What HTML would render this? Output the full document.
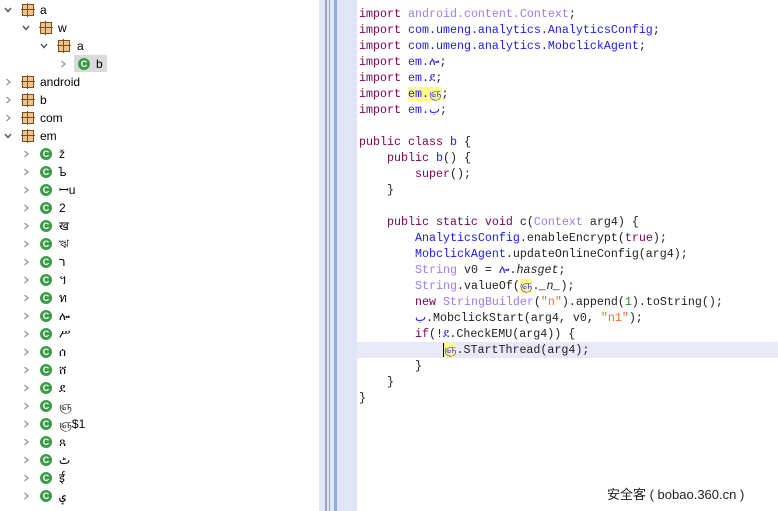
<!DOCTYPE html>
<html><head><meta charset="utf-8"><style>
*{margin:0;padding:0;box-sizing:border-box}
body{width:778px;height:511px;overflow:hidden;background:#fff;position:relative;font-family:"Liberation Sans","Noto Sans CJK SC",sans-serif}
.row{position:absolute;height:18px;line-height:18px;font-size:12px;color:#000;white-space:nowrap}
.chev{position:absolute;top:5px;width:8px;height:8px}
.pkg{position:absolute;top:3px;width:12px;height:12px;background:#e8c690;border:1px solid #8a4b1c}
.pkg:before{content:"";position:absolute;left:4px;top:-2px;width:1px;height:14px;background:#8a4b1c}
.pkg:after{content:"";position:absolute;top:4px;left:-2px;height:1px;width:14px;background:#8a4b1c}
.cls{position:absolute;top:3px;width:12px;height:12px;border-radius:50%;background:#3c9b48;color:#fff;font:900 9px/12px "Liberation Sans",sans-serif;text-align:center}
.t{position:absolute;top:0}
.strip{position:absolute;top:0;height:511px}
.code{position:absolute;left:359px;top:6px;font-family:"Liberation Mono","DejaVu Sans",monospace;font-size:11.67px;line-height:16px;color:#222;white-space:pre}
.k{color:#7f0055}.p{color:#a07cf0}.b{color:#1a1aff}.s{color:#ff6a1a}.g{color:#2a8a2a}
.y{background:#ffff88}
</style></head><body>
<div class="row" style="left:0;top:1px;width:300px"><svg class="chev" style="left:4px" viewBox="0 0 8 8"><path d="M1 2 L4 5.5 L7 2" fill="none" stroke="#555" stroke-width="1.4"/></svg><div class="pkg" style="left:22px"></div><span class="t" style="left:40px">a</span></div>
<div class="row" style="left:0;top:19px;width:300px"><svg class="chev" style="left:22px" viewBox="0 0 8 8"><path d="M1 2 L4 5.5 L7 2" fill="none" stroke="#555" stroke-width="1.4"/></svg><div class="pkg" style="left:40px"></div><span class="t" style="left:58px">w</span></div>
<div class="row" style="left:0;top:37px;width:300px"><svg class="chev" style="left:40px" viewBox="0 0 8 8"><path d="M1 2 L4 5.5 L7 2" fill="none" stroke="#555" stroke-width="1.4"/></svg><div class="pkg" style="left:58px"></div><span class="t" style="left:77px">a</span></div>
<div style="position:absolute;left:74px;top:55px;width:33px;height:17px;background:#dadada"></div>
<div class="row" style="left:0;top:55px;width:300px"><svg class="chev" style="left:59px" viewBox="0 0 8 8"><path d="M2.5 1 L6 4 L2.5 7" fill="none" stroke="#999" stroke-width="1.4"/></svg><div class="cls" style="left:78px">C</div><span class="t" style="left:96px">b</span></div>
<div class="row" style="left:0;top:73px"><svg class="chev" style="left:4px" viewBox="0 0 8 8"><path d="M2.5 1 L6 4 L2.5 7" fill="none" stroke="#999" stroke-width="1.4"/></svg><div class="pkg" style="left:22px"></div><span class="t" style="left:40px">android</span></div>
<div class="row" style="left:0;top:91px"><svg class="chev" style="left:4px" viewBox="0 0 8 8"><path d="M2.5 1 L6 4 L2.5 7" fill="none" stroke="#999" stroke-width="1.4"/></svg><div class="pkg" style="left:22px"></div><span class="t" style="left:40px">b</span></div>
<div class="row" style="left:0;top:109px"><svg class="chev" style="left:4px" viewBox="0 0 8 8"><path d="M2.5 1 L6 4 L2.5 7" fill="none" stroke="#999" stroke-width="1.4"/></svg><div class="pkg" style="left:22px"></div><span class="t" style="left:40px">com</span></div>
<div class="row" style="left:0;top:127px"><svg class="chev" style="left:4px" viewBox="0 0 8 8"><path d="M1 2 L4 5.5 L7 2" fill="none" stroke="#555" stroke-width="1.4"/></svg><div class="pkg" style="left:22px"></div><span class="t" style="left:40px">em</span></div>
<div class="row" style="left:0;top:145px"><svg class="chev" style="left:22px" viewBox="0 0 8 8"><path d="M2.5 1 L6 4 L2.5 7" fill="none" stroke="#999" stroke-width="1.4"/></svg><div class="cls" style="left:40px">C</div><span class="t" style="left:59px">ž</span></div>
<div class="row" style="left:0;top:163px"><svg class="chev" style="left:22px" viewBox="0 0 8 8"><path d="M2.5 1 L6 4 L2.5 7" fill="none" stroke="#999" stroke-width="1.4"/></svg><div class="cls" style="left:40px">C</div><span class="t" style="left:59px">ᲆ</span></div>
<div class="row" style="left:0;top:181px"><svg class="chev" style="left:22px" viewBox="0 0 8 8"><path d="M2.5 1 L6 4 L2.5 7" fill="none" stroke="#999" stroke-width="1.4"/></svg><div class="cls" style="left:40px">C</div><span class="t" style="left:59px">ꟷu</span></div>
<div class="row" style="left:0;top:199px"><svg class="chev" style="left:22px" viewBox="0 0 8 8"><path d="M2.5 1 L6 4 L2.5 7" fill="none" stroke="#999" stroke-width="1.4"/></svg><div class="cls" style="left:40px">C</div><span class="t" style="left:59px">2</span></div>
<div class="row" style="left:0;top:217px"><svg class="chev" style="left:22px" viewBox="0 0 8 8"><path d="M2.5 1 L6 4 L2.5 7" fill="none" stroke="#999" stroke-width="1.4"/></svg><div class="cls" style="left:40px">C</div><span class="t" style="left:59px">ख</span></div>
<div class="row" style="left:0;top:235px"><svg class="chev" style="left:22px" viewBox="0 0 8 8"><path d="M2.5 1 L6 4 L2.5 7" fill="none" stroke="#999" stroke-width="1.4"/></svg><div class="cls" style="left:40px">C</div><span class="t" style="left:59px">ঋ</span></div>
<div class="row" style="left:0;top:253px"><svg class="chev" style="left:22px" viewBox="0 0 8 8"><path d="M2.5 1 L6 4 L2.5 7" fill="none" stroke="#999" stroke-width="1.4"/></svg><div class="cls" style="left:40px">C</div><span class="t" style="left:59px">ר</span></div>
<div class="row" style="left:0;top:271px"><svg class="chev" style="left:22px" viewBox="0 0 8 8"><path d="M2.5 1 L6 4 L2.5 7" fill="none" stroke="#999" stroke-width="1.4"/></svg><div class="cls" style="left:40px">C</div><span class="t" style="left:59px">។</span></div>
<div class="row" style="left:0;top:289px"><svg class="chev" style="left:22px" viewBox="0 0 8 8"><path d="M2.5 1 L6 4 L2.5 7" fill="none" stroke="#999" stroke-width="1.4"/></svg><div class="cls" style="left:40px">C</div><span class="t" style="left:59px">ท</span></div>
<div class="row" style="left:0;top:307px"><svg class="chev" style="left:22px" viewBox="0 0 8 8"><path d="M2.5 1 L6 4 L2.5 7" fill="none" stroke="#999" stroke-width="1.4"/></svg><div class="cls" style="left:40px">C</div><span class="t" style="left:59px">ሎ</span></div>
<div class="row" style="left:0;top:325px"><svg class="chev" style="left:22px" viewBox="0 0 8 8"><path d="M2.5 1 L6 4 L2.5 7" fill="none" stroke="#999" stroke-width="1.4"/></svg><div class="cls" style="left:40px">C</div><span class="t" style="left:59px">ሥ</span></div>
<div class="row" style="left:0;top:343px"><svg class="chev" style="left:22px" viewBox="0 0 8 8"><path d="M2.5 1 L6 4 L2.5 7" fill="none" stroke="#999" stroke-width="1.4"/></svg><div class="cls" style="left:40px">C</div><span class="t" style="left:59px">ሰ</span></div>
<div class="row" style="left:0;top:361px"><svg class="chev" style="left:22px" viewBox="0 0 8 8"><path d="M2.5 1 L6 4 L2.5 7" fill="none" stroke="#999" stroke-width="1.4"/></svg><div class="cls" style="left:40px">C</div><span class="t" style="left:59px">ሸ</span></div>
<div class="row" style="left:0;top:379px"><svg class="chev" style="left:22px" viewBox="0 0 8 8"><path d="M2.5 1 L6 4 L2.5 7" fill="none" stroke="#999" stroke-width="1.4"/></svg><div class="cls" style="left:40px">C</div><span class="t" style="left:59px">ደ</span></div>
<div class="row" style="left:0;top:397px"><svg class="chev" style="left:22px" viewBox="0 0 8 8"><path d="M2.5 1 L6 4 L2.5 7" fill="none" stroke="#999" stroke-width="1.4"/></svg><div class="cls" style="left:40px">C</div><span class="t" style="left:59px">ஞ</span></div>
<div class="row" style="left:0;top:415px"><svg class="chev" style="left:22px" viewBox="0 0 8 8"><path d="M2.5 1 L6 4 L2.5 7" fill="none" stroke="#999" stroke-width="1.4"/></svg><div class="cls" style="left:40px">C</div><span class="t" style="left:59px">ஞ$1</span></div>
<div class="row" style="left:0;top:433px"><svg class="chev" style="left:22px" viewBox="0 0 8 8"><path d="M2.5 1 L6 4 L2.5 7" fill="none" stroke="#999" stroke-width="1.4"/></svg><div class="cls" style="left:40px">C</div><span class="t" style="left:59px">ጸ</span></div>
<div class="row" style="left:0;top:451px"><svg class="chev" style="left:22px" viewBox="0 0 8 8"><path d="M2.5 1 L6 4 L2.5 7" fill="none" stroke="#999" stroke-width="1.4"/></svg><div class="cls" style="left:40px">C</div><span class="t" style="left:59px">ٹ</span></div>
<div class="row" style="left:0;top:469px"><svg class="chev" style="left:22px" viewBox="0 0 8 8"><path d="M2.5 1 L6 4 L2.5 7" fill="none" stroke="#999" stroke-width="1.4"/></svg><div class="cls" style="left:40px">C</div><span class="t" style="left:59px">ई</span></div>
<div class="row" style="left:0;top:487px"><svg class="chev" style="left:22px" viewBox="0 0 8 8"><path d="M2.5 1 L6 4 L2.5 7" fill="none" stroke="#999" stroke-width="1.4"/></svg><div class="cls" style="left:40px">C</div><span class="t" style="left:59px">ؠ</span></div>

<div class="strip" style="left:319px;width:38px;background:#dfe6f5"></div>
<div class="strip" style="left:325px;width:2px;background:#a0a4ac"></div>
<div class="strip" style="left:329px;width:1px;background:#a0a4ac"></div>
<div class="strip" style="left:334px;width:3px;background:#8fa8e0"></div>
<div class="strip" style="left:340px;width:17px;background:#dfe4f6"></div>

<div style="position:absolute;left:357px;top:342px;width:421px;height:16px;background:#e8e8f8"></div>

<div class="code"><span class="k">import</span> <span class="p">android.content.Context</span>;
<span class="k">import</span> <span class="b">com.umeng.analytics.AnalyticsConfig</span>;
<span class="k">import</span> <span class="b">com.umeng.analytics.MobclickAgent</span>;
<span class="k">import</span> <span class="b">em.ሎ</span>;
<span class="k">import</span> <span class="b">em.ደ</span>;
<span class="k">import</span> <span class="b y">em.ஞ</span>;
<span class="k">import</span> <span class="b">em.ب</span>;

<span class="k">public class</span> <span class="b">b</span> {
    <span class="k">public</span> <span class="b">b</span>() {
        <span class="k">super</span>();
    }

    <span class="k">public static void</span> c(<span class="p">Context</span> arg4) {
        <span class="b">AnalyticsConfig</span>.enableEncrypt(<span class="k">true</span>);
        <span class="b">MobclickAgent</span>.updateOnlineConfig(arg4);
        <span class="p">String</span> v0 = <span class="b">ሎ</span>.<i>hasget</i>;
        <span class="p">String</span>.valueOf(<span class="b y">ஞ</span>.<i>_n_</i>);
        <span class="k">new</span> <span class="p">StringBuilder</span>(<span class="s">"n"</span>).append(<span class="g">1</span>).toString();
        <span class="b">ب</span>.MobclickStart(arg4, v0, <span class="s">"n1"</span>);
        <span class="k">if</span>(!<span class="b">ደ</span>.CheckEMU(arg4)) {
            <span class="b y" style="border-left:1px solid #000">ஞ</span>.STartThread(arg4);
        }
    }
}</div>

<div style="position:absolute;left:607px;top:484px;font-size:13px;color:#222;font-family:'Liberation Sans','Noto Sans CJK SC',sans-serif">安全客 ( bobao.360.cn )</div>
</body></html>
